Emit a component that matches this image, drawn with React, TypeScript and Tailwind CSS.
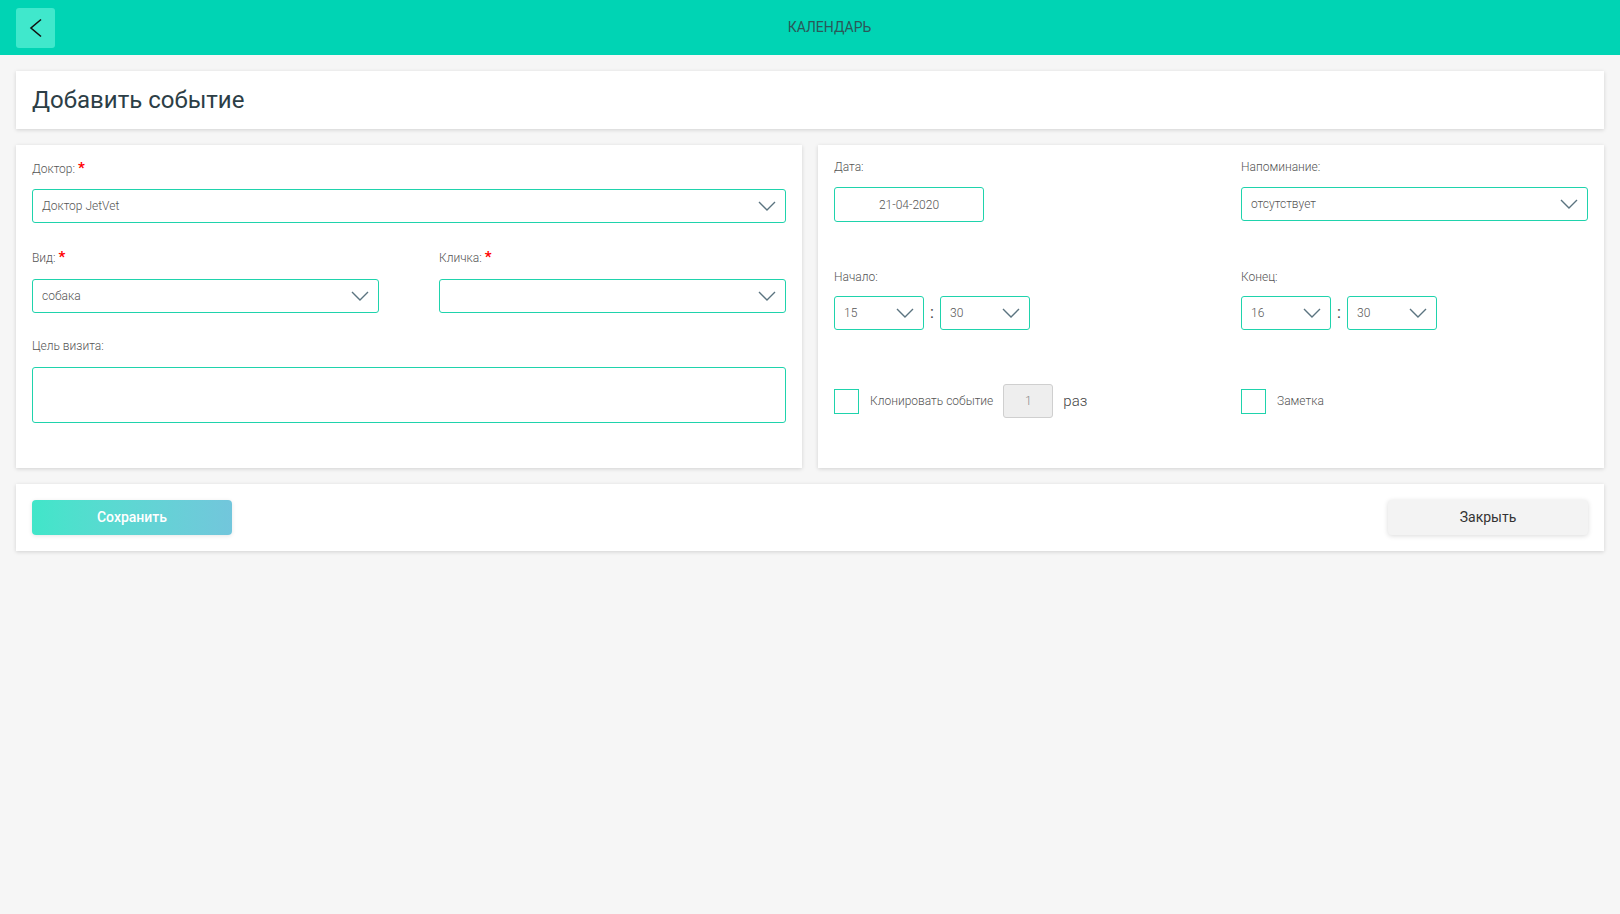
const Chevron = () => (
	<svg width="18" height="10" viewBox="0 0 18 10" fill="none" className="shrink-0">
		<polyline points="1,1 9,9 17,1" stroke="#5b7480" strokeWidth="1.4" />
	</svg>
);

function Label({ text, required }: { text: string; required?: boolean }) {
	return (
		<div className="h-[14px] text-[12px] leading-[14px] font-light text-[#555]">
			{text}
			{required && <span className="ml-[3px] font-bold text-[15px] text-[#ff0000]">*</span>}
		</div>
	);
}

function Select({ value, className = "" }: { value?: string; className?: string }) {
	return (
		<div
			className={
				"flex h-[34px] items-center justify-between rounded-[3px] border border-[#1fd3ac] bg-white pl-[9px] pr-[9px] text-[12px] font-light text-[#555] " +
				className
			}
		>
			<span>{value}</span>
			<Chevron />
		</div>
	);
}

function TimePick({ hour, minute }: { hour: string; minute: string }) {
	return (
		<div className="flex items-center">
			<Select value={hour} className="w-[90px]" />
			<span className="w-[16px] text-center text-[16px] text-[#444]">:</span>
			<Select value={minute} className="w-[90px]" />
		</div>
	);
}

export default function App() {
	return (
		<div className="min-h-screen bg-[#f6f6f6] font-['Roboto',sans-serif]">
			{/* Header */}
			<div className="flex h-[55px] items-center bg-[#00d4b4] pl-[16px]">
				<button className="flex h-[40px] w-[39px] items-center justify-center rounded-[3px] bg-[#40e8cc]">
					<svg width="14" height="20" viewBox="0 0 14 20" fill="none">
						<polyline points="12,1.5 2,10 12,18.5" stroke="#111" strokeWidth="1.6" />
					</svg>
				</button>
				<div className="flex-1 pr-[16px] text-center text-[14px] text-[#2b5858]">КАЛЕНДАРЬ</div>
			</div>

			<div className="flex flex-col gap-[16px] px-[16px] pt-[16px]">
				{/* Title */}
				<div className="flex h-[58px] items-center bg-white px-[16px] shadow-[0_1px_4px_rgba(0,0,0,0.15)]">
					<h1 className="text-[24px] text-[#2c3e46]">Добавить событие</h1>
				</div>

				{/* Form cards */}
				<div className="grid grid-cols-2 gap-[16px]">
					<div className="bg-white px-[16px] pt-[16px] pb-[45px] shadow-[0_1px_4px_rgba(0,0,0,0.15)]">
						<Label text="Доктор:" required />
						<Select value="Доктор JetVet" className="mt-[14px]" />
						<div className="mt-[27px] grid grid-cols-2 gap-[60px]">
							<div>
								<Label text="Вид:" required />
								<Select value="собака" className="mt-[15px]" />
							</div>
							<div>
								<Label text="Кличка:" required />
								<Select className="mt-[15px]" />
							</div>
						</div>
						<div className="mt-[26px]">
							<Label text="Цель визита:" />
							<div className="mt-[14px] h-[56px] rounded-[3px] border border-[#1fd3ac]" />
						</div>
					</div>

					<div className="bg-white px-[16px] pt-[15px] shadow-[0_1px_4px_rgba(0,0,0,0.15)]">
						<div className="grid grid-cols-2 gap-[60px]">
							<div>
								<Label text="Дата:" />
								<div className="mt-[13px] flex h-[35px] w-[150px] items-center justify-center rounded-[3px] border border-[#1fd3ac] text-[12px] font-light text-[#555]">
									21-04-2020
								</div>
								<div className="mt-[48px]">
									<Label text="Начало:" />
									<div className="mt-[12px]">
										<TimePick hour="15" minute="30" />
									</div>
								</div>
								<div className="mt-[54px] flex h-[34px] items-center">
									<div className="h-[25px] w-[25px] border border-[#1fd3ac]" />
									<span className="ml-[11px] text-[12px] font-light text-[#555]">Клонировать событие</span>
									<div className="ml-[10px] flex h-[34px] w-[50px] items-center justify-center rounded-[3px] border border-[#cfcfcf] bg-[#eeeeee] text-[12px] font-light text-[#888]">
										1
									</div>
									<span className="ml-[10px] text-[15px] font-light text-[#444]">раз</span>
								</div>
							</div>
							<div>
								<Label text="Напоминание:" />
								<Select value="отсутствует" className="mt-[13px]" />
								<div className="mt-[49px]">
									<Label text="Конец:" />
									<div className="mt-[12px]">
										<TimePick hour="16" minute="30" />
									</div>
								</div>
								<div className="mt-[54px] flex h-[34px] items-center">
									<div className="h-[25px] w-[25px] border border-[#1fd3ac]" />
									<span className="ml-[11px] text-[12px] font-light text-[#555]">Заметка</span>
								</div>
							</div>
						</div>
					</div>
				</div>

				{/* Actions */}
				<div className="flex items-center justify-between bg-white p-[16px] shadow-[0_1px_4px_rgba(0,0,0,0.15)]">
					<button className="h-[35px] w-[200px] rounded-[4px] bg-gradient-to-r from-[#40e6c9] to-[#72c6dc] text-[14px] font-medium text-white shadow-[0_1px_4px_rgba(0,0,0,0.1)]">
						Сохранить
					</button>
					<button className="h-[35px] w-[200px] rounded-[4px] bg-[#f3f3f3] text-[14px] text-[#333] shadow-[0_1px_5px_rgba(0,0,0,0.15)]">
						Закрыть
					</button>
				</div>
			</div>
		</div>
	);
}
